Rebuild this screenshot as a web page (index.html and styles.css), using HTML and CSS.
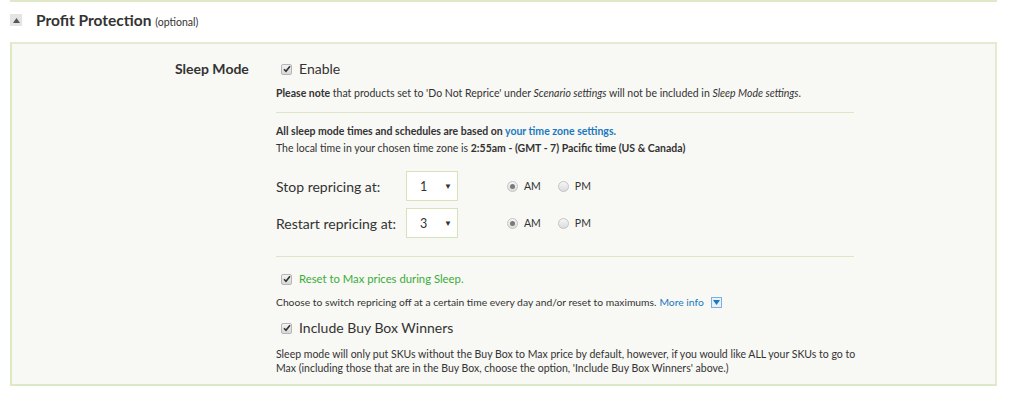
FILE: index.html
```html
<!DOCTYPE html>
<html lang="en">
<head>
  <meta charset="UTF-8" />
  <title>Profit Protection</title>
  <link rel="stylesheet" href="styles.css">
</head>
<body>
  <div class="prev-box"></div>

  <div class="section-head">
    <span class="toggle"><svg width="7" height="5" viewBox="0 0 7 5"><path d="M0 5 L3.5 0 L7 5 Z" fill="#555"/></svg></span>
    <h2>Profit Protection <small>(optional)</small></h2>
  </div>

  <div class="panel">
    <div class="label">Sleep Mode</div>
    <div class="content">
      <label class="check big enable">
        <span class="box"><svg width="8" height="8" viewBox="0 0 8 8"><path d="M1 4.2 L3 6.3 L7 1.2" stroke="#333" stroke-width="1.6" fill="none"/></svg></span>
        Enable
      </label>
      <p class="note please"><b>Please note</b> that products set to 'Do Not Reprice' under <i>Scenario settings</i> will not be included in <i>Sleep Mode settings</i>.</p>

      <hr class="hr1">

      <p class="note"><b>All sleep mode times and schedules are based on <a href="#">your time zone settings.</a></b></p>
      <p class="note tz">The local time in your chosen time zone is <b>2:55am - (GMT - 7) Pacific time (US &amp; Canada)</b></p>

      <div class="time-row first">
        <span class="time-label">Stop repricing at:</span>
        <div class="select">1 <span class="caret">&#9660;</span></div>
        <label class="radio"><span class="dot on"></span> AM</label>
        <label class="radio"><span class="dot"></span> PM</label>
      </div>
      <div class="time-row">
        <span class="time-label">Restart repricing at:</span>
        <div class="select">3 <span class="caret">&#9660;</span></div>
        <label class="radio"><span class="dot on"></span> AM</label>
        <label class="radio"><span class="dot"></span> PM</label>
      </div>

      <hr class="hr2">

      <label class="check green">
        <span class="box"><svg width="8" height="8" viewBox="0 0 8 8"><path d="M1 4.2 L3 6.3 L7 1.2" stroke="#333" stroke-width="1.6" fill="none"/></svg></span>
        Reset to Max prices during Sleep.
      </label>
      <p class="note choose">Choose to switch repricing off at a certain time every day and/or reset to maximums. <a href="#">More info</a> <span class="more"><svg width="7" height="5" viewBox="0 0 7 5"><path d="M0 0 L7 0 L3.5 5 Z" fill="#1a78c2"/></svg></span></p>

      <label class="check big include">
        <span class="box"><svg width="8" height="8" viewBox="0 0 8 8"><path d="M1 4.2 L3 6.3 L7 1.2" stroke="#333" stroke-width="1.6" fill="none"/></svg></span>
        Include Buy Box Winners
      </label>
      <p class="note last">Sleep mode will only put SKUs without the Buy Box to Max price by default, however, if you would like ALL your SKUs to go to Max (including those that are in the Buy Box, choose the option, 'Include Buy Box Winners' above.)</p>
    </div>
  </div>
</body>
</html>
```

FILE: styles.css
```css
body {
  margin: 0;
  font-family: Lato, "Open Sans", sans-serif;
  color: #333;
  background: #fff;
}

.prev-box {
  margin: 0 27px 0 10px;
  height: 0;
  border-bottom: 2px solid #dfe9c9;
}

.section-head {
  display: flex;
  align-items: center;
  padding: 7px 0 0 10px;
  height: 22px;
}

.toggle {
  width: 12px;
  height: 12px;
  background: #e4e4e4;
  display: flex;
  align-items: center;
  justify-content: center;
  margin-right: 14px;
}

.section-head h2 {
  margin: 0;
  font-size: 15.5px;
  font-weight: bold;
  color: #333;
}

.section-head small {
  font-size: 10.5px;
  font-weight: normal;
}

.panel {
  margin: 11px 27px 0 10px;
  border: 2px solid #e3ecd0;
  border-left-color: #dde8c4;
  border-bottom-color: #dde8c4;
  background: #f8f8f4;
  display: grid;
  grid-template-columns: 101px 578px;
  padding: 17px 0 9px 163px;
}

.label {
  font-size: 14px;
  font-weight: bold;
  line-height: 16px;
}

.check {
  display: flex;
  align-items: center;
  color: #333;
}

.check.big {
  font-size: 14px;
  line-height: 16px;
  height: 16px;
}

.include {
  font-size: 13.6px;
  margin-top: 11px;
}

.check.green {
  font-size: 11.3px;
  line-height: 14px;
  height: 14px;
  color: #3aad3a;
  margin-top: 15px;
}

.box {
  width: 9px;
  height: 9px;
  border: 1px solid #b5b5b5;
  border-radius: 2px;
  background: linear-gradient(#f4f4f4, #d8d8d8);
  display: flex;
  align-items: center;
  justify-content: center;
  margin: 0 7px 0 5px;
}

.note {
  font-size: 10.5px;
  line-height: 14px;
  margin: 0;
  color: #333;
}

.please {
  margin-top: 9px;
}

.note a {
  color: #1a78c2;
  text-decoration: none;
}

.tz {
  margin-top: 3px;
}

hr {
  border: 0;
  border-top: 1px solid #dde6c6;
  height: 0;
}

.hr1 {
  margin: 12px 0 11px;
}

.hr2 {
  margin: 18px 0 0;
}

.time-row {
  display: flex;
  align-items: center;
  height: 30px;
  margin-top: 7px;
}

.time-row.first {
  margin-top: 16px;
}

.time-label {
  width: 130px;
  font-size: 14px;
}

.select {
  width: 52px;
  height: 30px;
  box-sizing: border-box;
  border: 1px solid #d6e3b8;
  background: #fff;
  font-size: 12.5px;
  display: flex;
  align-items: center;
  justify-content: space-between;
  padding: 0 5px 0 13px;
  margin-right: 49px;
}

.caret {
  font-size: 8px;
}

.radio {
  display: flex;
  align-items: center;
  font-size: 10.5px;
  margin-right: 17px;
}

.dot {
  width: 9px;
  height: 9px;
  border: 1px solid #c4c4c4;
  border-radius: 50%;
  background: linear-gradient(#f6f6f6, #dcdcdc);
  margin-right: 6px;
  display: flex;
  align-items: center;
  justify-content: center;
}

.dot.on::after {
  content: "";
  width: 5px;
  height: 5px;
  border-radius: 50%;
  background: #7a7a7a;
}

.choose {
  margin-top: 9px;
  font-size: 10.3px;
  display: flex;
  align-items: center;
}

.choose a {
  margin-left: 3px;
}

.more {
  display: inline-flex;
  align-items: center;
  justify-content: center;
  width: 9px;
  height: 9px;
  border: 1px solid #7fb0dc;
  background: #e8f1fa;
  margin-left: 7px;
}

.last {
  margin-top: 11px;
  margin-right: -10px;
}
```
